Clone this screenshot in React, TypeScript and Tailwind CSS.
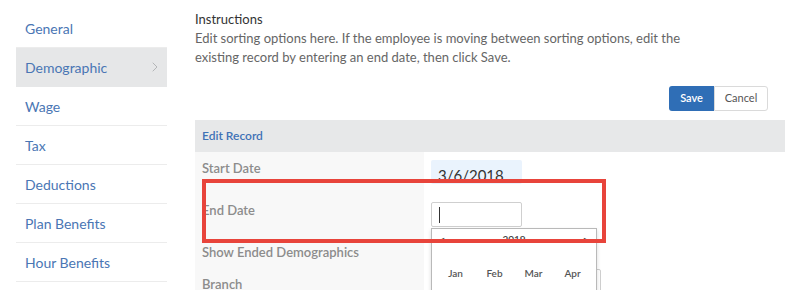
import { ChevronRight } from 'lucide-react';

const navItems = ['General', 'Demographic', 'Wage', 'Tax', 'Deductions', 'Plan Benefits', 'Hour Benefits'];

function Sidebar() {
  return (
    <nav className="ml-4 w-[151px] shrink-0 pt-[9px]">
      {navItems.map((item) => {
        const active = item === 'Demographic';
        return (
          <div
            key={item}
            className={`flex h-[39px] items-center justify-between border-b pl-[9px] pr-[4px] text-[14px] text-[#4a76b4] ${
              active ? 'border-[#e6e7e8] bg-[#e6e7e8]' : 'border-[#ececec]'
            }`}
          >
            <span>{item}</span>
            {active && <ChevronRight className="h-4 w-4 text-[#b4b6b8]" strokeWidth={1.5} />}
          </div>
        );
      })}
    </nav>
  );
}

function MonthPicker() {
  return (
    <div className="absolute left-0 top-[26px] z-10 h-[80px] w-[166px] border border-[#b9b9b9] bg-white shadow-[0_2px_4px_rgba(0,0,0,0.15)]">
      <div className="flex h-[20px] items-center justify-between px-[8px] text-[10px] text-[#444]">
        <span className="text-[8px]">◂</span>
        <span>2019</span>
        <span className="text-[8px]">▸</span>
      </div>
      <div className="mt-[17px] grid grid-cols-4 px-[4px] text-center text-[10px] text-[#555]">
        <span>Jan</span>
        <span>Feb</span>
        <span>Mar</span>
        <span>Apr</span>
      </div>
    </div>
  );
}

function EditRecord() {
  return (
    <div className="relative mt-[9px]">
      <div className="flex h-[32px] items-center bg-[#e7e8e9] pl-[7px] text-[12px] font-semibold text-[#3f72b6]">
        Edit Record
      </div>
      <div className="grid grid-cols-[229px_1fr] text-[13px] font-semibold text-[#8c8c8c]">
        <div className="h-[42px] bg-[#f8f8f8] pl-[7px] pt-[7px]">Start Date</div>
        <div className="h-[42px] pl-[7px] pt-[8px]">
          <div className="flex h-[24px] w-[91px] items-end rounded-[2px] bg-[#eaf3fd] pl-[7px] text-[15px] font-normal leading-[18px] text-[#333]">
            3/6/2018
          </div>
        </div>
        <div className="h-[41px] bg-[#f8f8f8] pl-[7px] pt-[7px]">End Date</div>
        <div className="relative h-[41px] pl-[7px] pt-[8px]">
          <div className="flex h-[25px] w-[91px] items-center rounded-[2px] border border-[#cfcfcf] bg-white pl-[7px]">
            <span className="h-[16px] w-px bg-[#333]" />
          </div>
          <div className="absolute left-[7px] top-[8px]">
            <MonthPicker />
          </div>
        </div>
        <div className="h-[33px] bg-[#f8f8f8] pl-[7px] pt-[8px]">Show Ended Demographics</div>
        <div className="h-[33px]" />
        <div className="h-[40px] bg-[#f8f8f8] pl-[7px] pt-[7px]">Branch</div>
        <div className="h-[40px] pl-[7px] pt-[1px]">
          <div className="h-[25px] w-[170px] rounded-[2px] border border-[#cfcfcf]" />
        </div>
      </div>
      <div className="pointer-events-none absolute left-[7px] top-[59px] z-20 h-[64px] w-[404px] border-[4px] border-[#e8443b]" />
    </div>
  );
}

export default function App() {
  return (
    <div
      className="flex h-[290px] w-[785px] overflow-hidden bg-white"
      style={{ fontFamily: 'Lato, "Open Sans", Arial, sans-serif' }}
    >
      <Sidebar />
      <main className="ml-[28px] flex-1">
        <div className="pt-[10px] text-[13px] leading-[19px] text-[#333]">Instructions</div>
        <p className="pr-[100px] text-[13px] leading-[19px] text-[#666]">
          Edit sorting options here. If the employee is moving between sorting options, edit the existing record by
          entering an end date, then click Save.
        </p>
        <div className="mt-[19px] flex justify-end pr-[17px]">
          <button className="h-[25px] w-[45px] rounded-l-[3px] bg-[#2f6eb6] text-[11px] font-semibold text-white">
            Save
          </button>
          <button className="h-[25px] w-[54px] rounded-r-[3px] border border-[#dadada] bg-white text-[11px] text-[#555]">
            Cancel
          </button>
        </div>
        <EditRecord />
      </main>
    </div>
  );
}
